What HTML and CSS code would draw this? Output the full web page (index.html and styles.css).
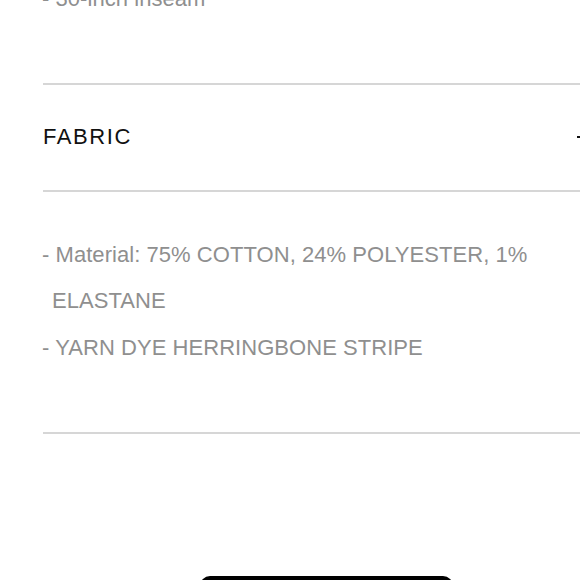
FILE: index.html
```html
<!DOCTYPE html>
<html>
<head>
<meta charset="utf-8">
<link rel="stylesheet" href="styles.css">
</head>
<body>
<div class="page">
  <div class="prev">
    <p class="item">- 30-inch inseam</p>
  </div>
  <div class="section">
    <div class="head">
      <span class="title">FABRIC</span>
      <span class="toggle"></span>
    </div>
    <div class="body">
      <p class="item">- Material: 75% COTTON, 24% POLYESTER, 1% ELASTANE</p>
      <p class="item">- YARN DYE HERRINGBONE STRIPE</p>
    </div>
  </div>
  <div class="footer">
    <button class="cta" type="button"></button>
  </div>
</div>
</body>
</html>
```
FILE: styles.css
```css
html, body {
  margin: 0;
  padding: 0;
  overflow: hidden;
  background: #ffffff;
}
body {
  width: 580px;
  height: 580px;
  font-family: "Liberation Sans", Arial, Helvetica, sans-serif;
}
.page {
  margin-left: 43px;
  width: 547px;
  margin-top: -24px;
}
.item {
  margin: 0;
  font-size: 22px;
  letter-spacing: 0.05px;
  line-height: 46.5px;
  color: #8f8f8f;
  padding-left: 9px;
  text-indent: -10px;
}
.prev {
  padding-bottom: 60px;
  border-bottom: 2px solid #d6d6d6;
}
.head {
  height: 105px;
  display: flex;
  align-items: center;
  justify-content: space-between;
  border-bottom: 2px solid #d6d6d6;
}
.title {
  font-size: 22px;
  letter-spacing: 1.6px;
  color: #111111;
}
.toggle {
  width: 13px;
  height: 2px;
  background: #111111;
  margin-right: 0;
}
.body {
  padding-top: 40px;
  padding-bottom: 61px;
  border-bottom: 2px solid #d6d6d6;
}
.footer {
  padding-top: 142px;
  padding-left: 157px;
}
.cta {
  display: block;
  width: 253px;
  height: 48px;
  border: none;
  border-radius: 10px;
  background: #000000;
  padding: 0;
}
```
